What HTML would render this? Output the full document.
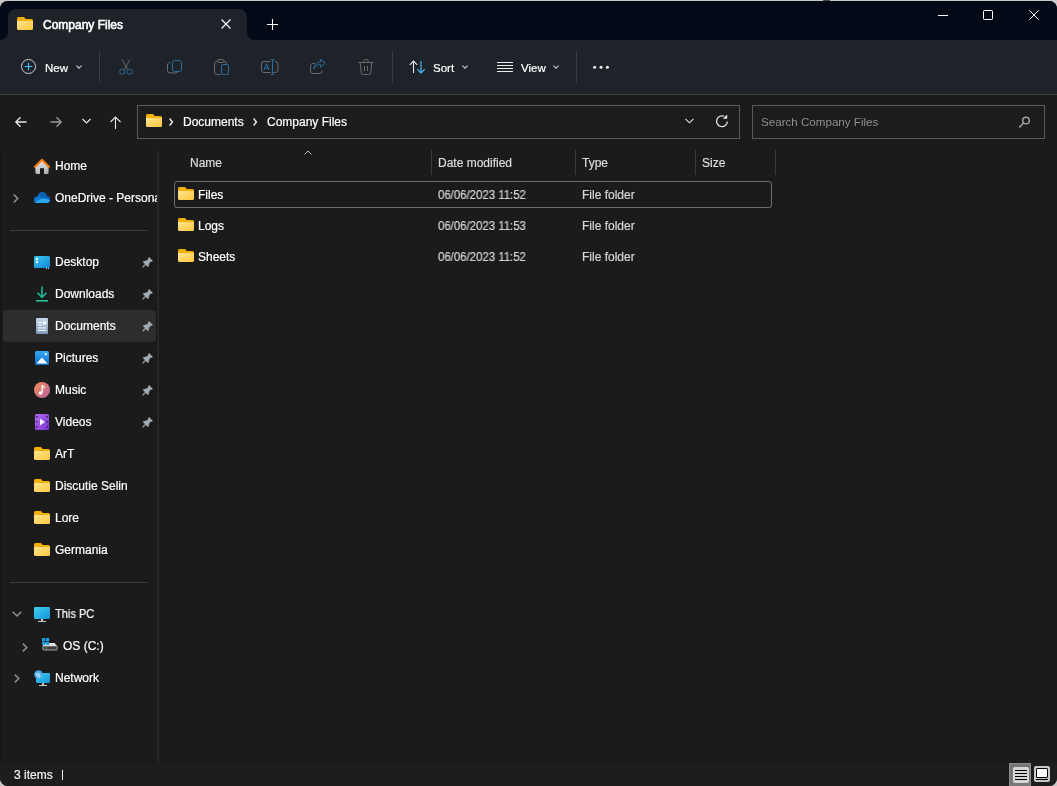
<!DOCTYPE html>
<html><head><meta charset="utf-8"><style>
*{margin:0;padding:0;box-sizing:border-box}
html,body{width:1057px;height:786px;overflow:hidden;background:#c8c8c8;font-family:"Liberation Sans",sans-serif;font-size:12px;color:#fff}
#win{position:absolute;left:0;top:1px;width:1057px;height:785px;background:#1b1b1b;border-radius:8px;overflow:hidden}
#in{position:absolute;left:0;top:-1px;width:1057px;height:786px}
.a{position:absolute}
.t{position:absolute;white-space:nowrap;font-size:12px;line-height:14px;will-change:transform;-webkit-text-stroke:0.2px currentColor}
.sep{position:absolute;width:1px;background:#3a3d44}
.box{position:absolute;border:1px solid #5a5a5a;background:#1c1c1c}
.hsep{position:absolute;width:1px;height:25px;top:150px;background:#3a3a3a}
.dim{color:#d6d6d6}
svg{position:absolute;overflow:visible}
</style></head><body>
<div class="a" style="left:823px;top:0;width:7px;height:1px;background:#454545"></div>
<div id="win"><div id="in">
<svg style="left:0;top:0" width="0" height="0"><defs><linearGradient id="fg" x1="0" y1="0" x2="1" y2="1"><stop offset="0" stop-color="#ffe590"/><stop offset="1" stop-color="#fdc73b"/></linearGradient></defs></svg>
<div class="a" style="left:0;top:0;width:1057px;height:40px;background:#020a17"></div>
<div class="a" style="left:8px;top:9px;width:239px;height:31px;background:#1e2229;border-radius:8px 8px 0 0"></div>
<div class="a" style="left:0;top:32px;width:8px;height:8px;background:#1e2229"></div>
<div class="a" style="left:0;top:32px;width:8px;height:8px;background:#020a17;border-radius:0 0 8px 0"></div>
<div class="a" style="left:247px;top:32px;width:8px;height:8px;background:#1e2229"></div>
<div class="a" style="left:247px;top:32px;width:8px;height:8px;background:#020a17;border-radius:0 0 0 8px"></div>
<svg style="left:17px;top:17px" width="16" height="13" viewBox="0 0 16 13"><path d="M1.5 0H7L8.8 2H14.5A1.5 1.5 0 0 1 16 3.5V8H0V1.5A1.5 1.5 0 0 1 1.5 0Z" fill="#f0b00a"/><path d="M0 4H16V11.5A1.5 1.5 0 0 1 14.5 13H1.5A1.5 1.5 0 0 1 0 11.5Z" fill="url(#fg)"/></svg>
<div class="t" style="left:43px;top:18px;font-size:12px;-webkit-text-stroke:0.55px #fff">Company Files</div>
<svg style="left:221px;top:19px" width="10" height="10" viewBox="0 0 10 10"><path d="M0.5 0.5L9.5 9.5M9.5 0.5L0.5 9.5" stroke="#fff" stroke-width="1.1"/></svg>
<svg style="left:267px;top:19px" width="11" height="11" viewBox="0 0 11 11"><path d="M5.5 0V11M0 5.5H11" stroke="#fff" stroke-width="1.1"/></svg>
<div class="a" style="left:938px;top:15px;width:10px;height:1px;background:#fff"></div>
<div class="a" style="left:983px;top:10px;width:10px;height:10px;border:1px solid #fff;border-radius:1.5px"></div>
<svg style="left:1029px;top:10px" width="10" height="10" viewBox="0 0 10 10"><path d="M0.3 0.3L9.7 9.7M9.7 0.3L0.3 9.7" stroke="#fff" stroke-width="1"/></svg>
<div class="a" style="left:0;top:40px;width:1057px;height:54px;background:#1e2229"></div>
<div class="a" style="left:0;top:94px;width:1057px;height:1px;background:#3e3e3e"></div>
<svg style="left:21px;top:59px" width="15" height="15" viewBox="0 0 15 15"><circle cx="7.5" cy="7.5" r="7" fill="none" stroke="#cfcfcf" stroke-width="1"/><path d="M7.5 3.8V11.2M3.8 7.5H11.2" stroke="#4cc2ff" stroke-width="1.1"/></svg>
<div class="t" style="left:45px;top:61px;font-size:11.5px">New</div>
<svg style="left:76px;top:65px" width="6" height="4" viewBox="0 0 6 4"><path d="M0.4 0.6L3 3.2L5.6 0.6" fill="none" stroke="#c4c4c4" stroke-width="1.1"/></svg>
<div class="sep" style="left:99px;top:51px;height:32px"></div>
<svg style="left:119px;top:59px" width="14" height="16" viewBox="0 0 14 16"><path d="M3 0.5L8.6 10.3M11 0.5L5.4 10.3" stroke="#6a6a6a" stroke-width="1" fill="none"/><circle cx="3.3" cy="12.7" r="2.6" fill="none" stroke="#2b6e9c" stroke-width="1"/><circle cx="10.7" cy="12.7" r="2.6" fill="none" stroke="#2b6e9c" stroke-width="1"/></svg>
<svg style="left:167px;top:59px" width="15" height="15" viewBox="0 0 15 15"><path d="M3.5 3.5A2.5 2.5 0 0 0 0.5 6V11.5A2.5 2.5 0 0 0 3 14H8.5A2.5 2.5 0 0 0 11 11.8" fill="none" stroke="#6a6a6a" stroke-width="1"/><rect x="5.5" y="1.5" width="9" height="11" rx="2.2" fill="none" stroke="#2b6e9c" stroke-width="1"/></svg>
<svg style="left:214px;top:58px" width="16" height="18" viewBox="0 0 16 18"><path d="M3.5 3.5H2.8A2.3 2.3 0 0 0 0.5 5.8V14.2A2.3 2.3 0 0 0 2.8 16.5H6.5" fill="none" stroke="#6a6a6a" stroke-width="1"/><path d="M10 3.5H10.2A2.3 2.3 0 0 1 12.5 5.8V6" fill="none" stroke="#6a6a6a" stroke-width="1"/><rect x="3.5" y="1.5" width="6.5" height="3" rx="1.5" fill="none" stroke="#6a6a6a" stroke-width="1"/><rect x="7.5" y="6.5" width="7" height="10" rx="1.6" fill="none" stroke="#2b6e9c" stroke-width="1"/></svg>
<svg style="left:261px;top:59px" width="18" height="16" viewBox="0 0 18 16"><path d="M9.5 2.5H3A2.5 2.5 0 0 0 0.5 5V11A2.5 2.5 0 0 0 3 13.5H9.5M13.5 2.5H14.5A2.5 2.5 0 0 1 17 5V11A2.5 2.5 0 0 1 14.5 13.5H12.5" fill="none" stroke="#6a6a6a" stroke-width="1"/><path d="M9.8 0.5H13.2M11.5 0.5V15.5M9.8 15.5H13.2" fill="none" stroke="#2b6e9c" stroke-width="1.1"/><path d="M3.2 11L5.6 4.5L8 11M4 9H7.2" fill="none" stroke="#2b6e9c" stroke-width="1"/></svg>
<svg style="left:310px;top:59px" width="16" height="15" viewBox="0 0 16 15"><path d="M5 4.5H3A2.5 2.5 0 0 0 0.5 7V12A2.5 2.5 0 0 0 3 14.5H9.5A2.5 2.5 0 0 0 12 12V11.5" fill="none" stroke="#6a6a6a" stroke-width="1"/><path d="M4 10C4.6 6.8 7.2 5.6 10.5 5.6V8.3L15.3 4.2L10.5 0.3V3C6.3 3.2 4.2 6.3 4 10Z" fill="none" stroke="#2b6e9c" stroke-width="1" stroke-linejoin="round"/></svg>
<svg style="left:358px;top:59px" width="16" height="16" viewBox="0 0 16 16"><path d="M0.5 3.5H15.5M5.8 3.5V2.3A1.8 1.8 0 0 1 7.6 0.5H8.4A1.8 1.8 0 0 1 10.2 2.3V3.5M2.2 3.5L3.2 13.7A2 2 0 0 0 5.2 15.5H10.8A2 2 0 0 0 12.8 13.7L13.8 3.5M6.5 7V12M9.5 7V12" fill="none" stroke="#6a6a6a" stroke-width="1"/></svg>
<div class="sep" style="left:392px;top:51px;height:32px"></div>
<svg style="left:409px;top:60px" width="17" height="14" viewBox="0 0 17 14"><path d="M4.5 13V1M0.8 4.8L4.5 1L8.2 4.8" fill="none" stroke="#e6e6e6" stroke-width="1.1"/><path d="M12 1V13M8.3 9.2L12 13L15.7 9.2" fill="none" stroke="#4cc2ff" stroke-width="1.1"/></svg>
<div class="t" style="left:433px;top:61px;font-size:11.5px">Sort</div>
<svg style="left:462px;top:65px" width="6" height="4" viewBox="0 0 6 4"><path d="M0.4 0.6L3 3.2L5.6 0.6" fill="none" stroke="#c4c4c4" stroke-width="1.1"/></svg>
<div class="a" style="left:497px;top:62px;width:16px;height:1px;background:#eee"></div>
<div class="a" style="left:497px;top:65px;width:16px;height:1px;background:#eee"></div>
<div class="a" style="left:497px;top:68px;width:16px;height:1px;background:#eee"></div>
<div class="a" style="left:497px;top:71px;width:16px;height:1px;background:#eee"></div>
<div class="t" style="left:521px;top:61px;font-size:11.5px">View</div>
<svg style="left:553px;top:65px" width="6" height="4" viewBox="0 0 6 4"><path d="M0.4 0.6L3 3.2L5.6 0.6" fill="none" stroke="#c4c4c4" stroke-width="1.1"/></svg>
<div class="sep" style="left:576px;top:51px;height:32px"></div>
<svg style="left:593px;top:65px" width="16" height="4" viewBox="0 0 16 4"><circle cx="1.6" cy="2.2" r="1.5" fill="#eee"/><circle cx="8" cy="2.2" r="1.5" fill="#eee"/><circle cx="14.4" cy="2.2" r="1.5" fill="#eee"/></svg>
<svg style="left:15px;top:116px" width="12" height="12" viewBox="0 0 12 12"><path d="M11.5 6H1M5.5 1.2L0.8 6L5.5 10.8" fill="none" stroke="#e8e8e8" stroke-width="1.3"/></svg>
<svg style="left:50px;top:116px" width="12" height="12" viewBox="0 0 12 12"><path d="M0.5 6H11M6.5 1.2L11.2 6L6.5 10.8" fill="none" stroke="#9a9a9a" stroke-width="1.3"/></svg>
<svg style="left:82px;top:118px" width="9" height="6" viewBox="0 0 9 6"><path d="M0.5 1L4.5 5L8.5 1" fill="none" stroke="#e8e8e8" stroke-width="1.2"/></svg>
<svg style="left:110px;top:116px" width="11" height="13" viewBox="0 0 11 13"><path d="M5.5 13V1M0.5 6L5.5 1L10.5 6" fill="none" stroke="#e8e8e8" stroke-width="1.1"/></svg>
<div class="box" style="left:137px;top:105px;width:603px;height:34px"></div>
<svg style="left:146px;top:114px" width="16" height="13" viewBox="0 0 16 13"><path d="M1.5 0H7L8.8 2H14.5A1.5 1.5 0 0 1 16 3.5V8H0V1.5A1.5 1.5 0 0 1 1.5 0Z" fill="#f0b00a"/><path d="M0 4H16V11.5A1.5 1.5 0 0 1 14.5 13H1.5A1.5 1.5 0 0 1 0 11.5Z" fill="url(#fg)"/></svg>
<svg style="left:169px;top:118px" width="4" height="8" viewBox="0 0 4 8"><path d="M0.6 0.6L3.4 4L0.6 7.4" fill="none" stroke="#e8e8e8" stroke-width="1.5"/></svg>
<div class="t" style="left:183px;top:115px;">Documents</div>
<svg style="left:253px;top:118px" width="4" height="8" viewBox="0 0 4 8"><path d="M0.6 0.6L3.4 4L0.6 7.4" fill="none" stroke="#e8e8e8" stroke-width="1.5"/></svg>
<div class="t" style="left:267px;top:115px;">Company Files</div>
<svg style="left:685px;top:118px" width="9" height="6" viewBox="0 0 9 6"><path d="M0.5 0.8L4.5 4.8L8.5 0.8" fill="none" stroke="#e0e0e0" stroke-width="1.1"/></svg>
<svg style="left:716px;top:115px" width="13" height="13" viewBox="0 0 13 13"><path d="M11.4 6.6A5.4 5.4 0 1 1 8.3 1.3" fill="none" stroke="#e8e8e8" stroke-width="1.25"/><path d="M6.8 3.8H11.2V-0.4Z" fill="#e8e8e8"/></svg>
<div class="box" style="left:752px;top:105px;width:293px;height:34px"></div>
<div class="t" style="left:761px;top:115px;color:#8f8f8f;font-size:11.6px;-webkit-text-stroke:0">Search Company Files</div>
<svg style="left:1018px;top:116px" width="12" height="13" viewBox="0 0 12 13"><circle cx="8" cy="4.5" r="3.3" fill="none" stroke="#a0a0a0" stroke-width="1.5"/><path d="M5.8 6.8L1.2 11.5" stroke="#a0a0a0" stroke-width="1.6"/></svg>
<div class="a" style="left:0;top:150px;width:2px;height:613px;background:#171717"></div>
<div class="a" style="left:156px;top:150px;width:1px;height:613px;background:#171717"></div>
<div class="a" style="left:157px;top:150px;width:2px;height:613px;background:#262626;border-radius:1px"></div>
<div class="a" style="left:3px;top:310px;width:153px;height:32px;background:#2d2d2d;border-radius:4px"></div>
<div class="a" style="left:10px;top:230px;width:138px;height:1px;background:#3a3a3a"></div>
<div class="a" style="left:10px;top:582px;width:138px;height:1px;background:#3a3a3a"></div>
<svg style="left:34px;top:158px" width="16" height="16" viewBox="0 0 16 16"><defs><linearGradient id="hg" x1="0" y1="0" x2="0.3" y2="1"><stop offset="0" stop-color="#ececec"/><stop offset="1" stop-color="#b4b4b4"/></linearGradient></defs><path d="M8 2.2L14.6 8.4V14.6A1.4 1.4 0 0 1 13.2 16H10V10.2H6V16H2.8A1.4 1.4 0 0 1 1.4 14.6V8.4Z" fill="url(#hg)"/><path d="M1 8.8L8 1.8L15 8.8" fill="none" stroke="#f27a0c" stroke-width="2.2" stroke-linecap="round" stroke-linejoin="round"/></svg>
<div class="t" style="left:55px;top:159px;">Home</div>
<svg style="left:13px;top:194px" width="6" height="9" viewBox="0 0 6 9"><path d="M0.8 0.6L4.8 4.5L0.8 8.4" fill="none" stroke="#8f8f8f" stroke-width="1.5"/></svg>
<svg style="left:34px;top:192px" width="16" height="11" viewBox="0 0 16 11"><defs><clipPath id="cc"><circle cx="3.3" cy="7.7" r="3.3"/><circle cx="8.3" cy="4.7" r="4.5"/><circle cx="12.7" cy="7.6" r="3.3"/><rect x="3.3" y="7" width="9.4" height="4"/></clipPath></defs><g clip-path="url(#cc)"><rect x="0" y="0" width="16" height="11" fill="#0f78d4"/><path d="M5 0H16V8.2C13.5 5.8 10 5.6 7.5 6.6L4.5 3.5Z" fill="#0862b6"/><path d="M0 10.6C3 9.6 6 6.6 9.5 6.6C12.5 6.6 14.5 7.6 16 8.6V11H0Z" fill="#29a9ec"/></g></svg>
<div class="t" style="left:55px;top:191px;width:102px;overflow:hidden">OneDrive - Personal</div>
<svg style="left:34px;top:256px" width="16" height="13" viewBox="0 0 16 13"><defs><linearGradient id="dg" x1="0" y1="0" x2="1" y2="1"><stop offset="0" stop-color="#3ccbf4"/><stop offset="1" stop-color="#1383d4"/></linearGradient></defs><rect x="0" y="0" width="16" height="12" rx="1.5" fill="url(#dg)"/><rect x="2" y="2" width="2" height="2" fill="#fff"/><rect x="2" y="5" width="2" height="2" fill="#fff"/><rect x="12" y="12" width="1" height="1" fill="#ddd"/><rect x="14" y="12" width="1" height="1" fill="#ddd"/></svg>
<div class="t" style="left:55px;top:255px;">Desktop</div>
<svg style="left:136px;top:249px" width="24" height="24" viewBox="0 0 24 24"><g transform="translate(9.85,15.05) rotate(45)"><path d="M-2.6 -7H2.6L1.4 -3.8L3.7 0.5H-3.7L-1.4 -3.8Z" fill="#a2aab2" stroke="#a2aab2" stroke-width="0.4" stroke-linejoin="round"/><path d="M0 0.5V3.8" stroke="#a2aab2" stroke-width="1.3" stroke-linecap="round"/></g></svg>
<svg style="left:36px;top:286px" width="12" height="16" viewBox="0 0 12 16"><path d="M6 0.5V11M1.5 6.8L6 11.3L10.5 6.8" fill="none" stroke="#1fb89a" stroke-width="1.6"/><rect x="0" y="14" width="12" height="1.6" fill="#22c3a0"/></svg>
<div class="t" style="left:55px;top:287px;">Downloads</div>
<svg style="left:136px;top:281px" width="24" height="24" viewBox="0 0 24 24"><g transform="translate(9.85,15.05) rotate(45)"><path d="M-2.6 -7H2.6L1.4 -3.8L3.7 0.5H-3.7L-1.4 -3.8Z" fill="#a2aab2" stroke="#a2aab2" stroke-width="0.4" stroke-linejoin="round"/><path d="M0 0.5V3.8" stroke="#a2aab2" stroke-width="1.3" stroke-linecap="round"/></g></svg>
<svg style="left:36px;top:318px" width="12" height="16" viewBox="0 0 12 16"><defs><linearGradient id="docg" x1="0" y1="0" x2="0" y2="1"><stop offset="0" stop-color="#c8d8ea"/><stop offset="1" stop-color="#7f9ab8"/></linearGradient></defs><rect x="0" y="0" width="12" height="16" rx="1.2" fill="url(#docg)"/><rect x="2" y="4" width="4" height="1" fill="#fff"/><rect x="2" y="6.5" width="4" height="1" fill="#fff"/><rect x="7" y="3.5" width="3" height="3" fill="#fff"/><rect x="2" y="9.5" width="8" height="1" fill="#fff"/><rect x="2" y="12" width="8" height="1" fill="#fff"/></svg>
<div class="t" style="left:55px;top:319px;">Documents</div>
<svg style="left:136px;top:313px" width="24" height="24" viewBox="0 0 24 24"><g transform="translate(9.85,15.05) rotate(45)"><path d="M-2.6 -7H2.6L1.4 -3.8L3.7 0.5H-3.7L-1.4 -3.8Z" fill="#a2aab2" stroke="#a2aab2" stroke-width="0.4" stroke-linejoin="round"/><path d="M0 0.5V3.8" stroke="#a2aab2" stroke-width="1.3" stroke-linecap="round"/></g></svg>
<svg style="left:35px;top:351px" width="14" height="14" viewBox="0 0 14 14"><defs><linearGradient id="pg" x1="0" y1="0" x2="0" y2="1"><stop offset="0" stop-color="#36a8f4"/><stop offset="1" stop-color="#0b6fcc"/></linearGradient></defs><rect x="0" y="0" width="14" height="14" rx="1.5" fill="url(#pg)"/><path d="M1.5 12.5L7 6.5L12.5 12.5Z" fill="#fff"/><circle cx="10.8" cy="3.2" r="1.1" fill="#fff"/></svg>
<div class="t" style="left:55px;top:351px;">Pictures</div>
<svg style="left:136px;top:345px" width="24" height="24" viewBox="0 0 24 24"><g transform="translate(9.85,15.05) rotate(45)"><path d="M-2.6 -7H2.6L1.4 -3.8L3.7 0.5H-3.7L-1.4 -3.8Z" fill="#a2aab2" stroke="#a2aab2" stroke-width="0.4" stroke-linejoin="round"/><path d="M0 0.5V3.8" stroke="#a2aab2" stroke-width="1.3" stroke-linecap="round"/></g></svg>
<svg style="left:34px;top:382px" width="16" height="16" viewBox="0 0 16 16"><defs><linearGradient id="mg" x1="0" y1="0" x2="1" y2="1"><stop offset="0" stop-color="#f29055"/><stop offset="1" stop-color="#b9609e"/></linearGradient></defs><circle cx="8" cy="8" r="8" fill="url(#mg)"/><path d="M8.2 3.2V10.5" stroke="#fff" stroke-width="1.4"/><circle cx="6.6" cy="11" r="1.8" fill="#fff"/><path d="M8.2 3.5C9.5 4 10.5 4.5 10.2 6.2" fill="none" stroke="#fff" stroke-width="1.2"/></svg>
<div class="t" style="left:55px;top:383px;">Music</div>
<svg style="left:136px;top:377px" width="24" height="24" viewBox="0 0 24 24"><g transform="translate(9.85,15.05) rotate(45)"><path d="M-2.6 -7H2.6L1.4 -3.8L3.7 0.5H-3.7L-1.4 -3.8Z" fill="#a2aab2" stroke="#a2aab2" stroke-width="0.4" stroke-linejoin="round"/><path d="M0 0.5V3.8" stroke="#a2aab2" stroke-width="1.3" stroke-linecap="round"/></g></svg>
<svg style="left:35px;top:414px" width="14" height="16" viewBox="0 0 14 16"><defs><linearGradient id="vg" x1="0" y1="0" x2="1" y2="1"><stop offset="0" stop-color="#b06cf0"/><stop offset="1" stop-color="#7a34d0"/></linearGradient></defs><rect x="0" y="0" width="14" height="16" rx="1.5" fill="url(#vg)"/><rect x="1" y="2" width="1.5" height="1.5" fill="#3b1a6a"/><rect x="1" y="7" width="1.5" height="1.5" fill="#3b1a6a"/><rect x="1" y="12" width="1.5" height="1.5" fill="#3b1a6a"/><rect x="11.5" y="2" width="1.5" height="1.5" fill="#3b1a6a"/><rect x="11.5" y="7" width="1.5" height="1.5" fill="#3b1a6a"/><rect x="11.5" y="12" width="1.5" height="1.5" fill="#3b1a6a"/><path d="M5 4.5L10 8L5 11.5Z" fill="#f4f0fa"/></svg>
<div class="t" style="left:55px;top:415px;">Videos</div>
<svg style="left:136px;top:409px" width="24" height="24" viewBox="0 0 24 24"><g transform="translate(9.85,15.05) rotate(45)"><path d="M-2.6 -7H2.6L1.4 -3.8L3.7 0.5H-3.7L-1.4 -3.8Z" fill="#a2aab2" stroke="#a2aab2" stroke-width="0.4" stroke-linejoin="round"/><path d="M0 0.5V3.8" stroke="#a2aab2" stroke-width="1.3" stroke-linecap="round"/></g></svg>
<svg style="left:34px;top:447px" width="16" height="13" viewBox="0 0 16 13"><path d="M1.5 0H7L8.8 2H14.5A1.5 1.5 0 0 1 16 3.5V8H0V1.5A1.5 1.5 0 0 1 1.5 0Z" fill="#f0b00a"/><path d="M0 4H16V11.5A1.5 1.5 0 0 1 14.5 13H1.5A1.5 1.5 0 0 1 0 11.5Z" fill="url(#fg)"/></svg>
<div class="t" style="left:55px;top:447px;">ArT</div>
<svg style="left:34px;top:479px" width="16" height="13" viewBox="0 0 16 13"><path d="M1.5 0H7L8.8 2H14.5A1.5 1.5 0 0 1 16 3.5V8H0V1.5A1.5 1.5 0 0 1 1.5 0Z" fill="#f0b00a"/><path d="M0 4H16V11.5A1.5 1.5 0 0 1 14.5 13H1.5A1.5 1.5 0 0 1 0 11.5Z" fill="url(#fg)"/></svg>
<div class="t" style="left:55px;top:479px;">Discutie Selin</div>
<svg style="left:34px;top:511px" width="16" height="13" viewBox="0 0 16 13"><path d="M1.5 0H7L8.8 2H14.5A1.5 1.5 0 0 1 16 3.5V8H0V1.5A1.5 1.5 0 0 1 1.5 0Z" fill="#f0b00a"/><path d="M0 4H16V11.5A1.5 1.5 0 0 1 14.5 13H1.5A1.5 1.5 0 0 1 0 11.5Z" fill="url(#fg)"/></svg>
<div class="t" style="left:55px;top:511px;">Lore</div>
<svg style="left:34px;top:543px" width="16" height="13" viewBox="0 0 16 13"><path d="M1.5 0H7L8.8 2H14.5A1.5 1.5 0 0 1 16 3.5V8H0V1.5A1.5 1.5 0 0 1 1.5 0Z" fill="#f0b00a"/><path d="M0 4H16V11.5A1.5 1.5 0 0 1 14.5 13H1.5A1.5 1.5 0 0 1 0 11.5Z" fill="url(#fg)"/></svg>
<div class="t" style="left:55px;top:543px;">Germania</div>
<svg style="left:12px;top:611px" width="10" height="6" viewBox="0 0 10 6"><path d="M0.7 0.7L5 5L9.3 0.7" fill="none" stroke="#8f8f8f" stroke-width="1.5"/></svg>
<svg style="left:34px;top:607px" width="16" height="15" viewBox="0 0 16 15"><defs><linearGradient id="pcg" x1="0" y1="0" x2="1" y2="1"><stop offset="0" stop-color="#3fd0f0"/><stop offset="1" stop-color="#1590d8"/></linearGradient></defs><rect x="0" y="0" width="16" height="12" rx="1" fill="url(#pcg)"/><rect x="7" y="12" width="2" height="2" fill="#c8c8c8"/><rect x="4" y="14" width="8" height="1" fill="#c8c8c8"/></svg>
<div class="t" style="left:55px;top:607px;transform:scaleX(0.92);transform-origin:0 0">This PC</div>
<svg style="left:22px;top:643px" width="6" height="9" viewBox="0 0 6 9"><path d="M0.8 0.6L4.8 4.5L0.8 8.4" fill="none" stroke="#8f8f8f" stroke-width="1.5"/></svg>
<svg style="left:42px;top:638px" width="16" height="13" viewBox="0 0 16 13"><path d="M2.2 5H12.6L15.2 8.2H0.6Z" fill="#e4e4e4"/><rect x="0.9" y="8" width="14.2" height="4" rx="0.6" fill="#3c3c3c" stroke="#bdbdbd" stroke-width="0.8"/><rect x="3.6" y="9.3" width="1.3" height="1.3" fill="#3fd13f"/><rect x="0" y="0" width="3.3" height="3.2" fill="#1b9de2"/><rect x="3.8" y="0" width="3.3" height="3.2" fill="#1b9de2"/><rect x="0" y="3.7" width="3.3" height="3.2" fill="#1b9de2"/><rect x="3.8" y="3.7" width="3.3" height="3.2" fill="#1b9de2"/></svg>
<div class="t" style="left:63px;top:639px;">OS (C:)</div>
<svg style="left:14px;top:674px" width="6" height="9" viewBox="0 0 6 9"><path d="M0.8 0.6L4.8 4.5L0.8 8.4" fill="none" stroke="#8f8f8f" stroke-width="1.5"/></svg>
<svg style="left:34px;top:670px" width="16" height="16" viewBox="0 0 16 16"><rect x="2" y="3" width="14" height="10" rx="1" fill="url(#pcg)"/><rect x="8" y="13" width="2" height="2" fill="#c8c8c8"/><rect x="5" y="15" width="8" height="1" fill="#c8c8c8"/><circle cx="4.5" cy="4.5" r="4.3" fill="#4aa6e6"/><path d="M1.2 3.6C2.6 2.2 5 2.4 6.2 4C7.2 5.4 6.8 7.4 5.6 8.4C4 7.5 2 6 1.2 3.6Z" fill="#9ad6f6"/></svg>
<div class="t" style="left:55px;top:671px;">Network</div>
<div class="t" style="left:190px;top:156px;color:#dcdcdc">Name</div>
<svg style="left:304px;top:150px" width="8" height="5" viewBox="0 0 8 5"><path d="M0.5 4.5L4 1L7.5 4.5" fill="none" stroke="#bdbdbd" stroke-width="1"/></svg>
<div class="hsep" style="left:431px"></div>
<div class="hsep" style="left:575px"></div>
<div class="hsep" style="left:695px"></div>
<div class="hsep" style="left:775px"></div>
<div class="t" style="left:438px;top:156px;color:#dcdcdc">Date modified</div>
<div class="t" style="left:582px;top:156px;color:#dcdcdc">Type</div>
<div class="t" style="left:702px;top:156px;color:#dcdcdc">Size</div>
<div class="a" style="left:174px;top:181px;width:598px;height:27px;border:1px solid #6e6e6e;border-radius:3px"></div>
<svg style="left:178px;top:187px" width="16" height="13" viewBox="0 0 16 13"><path d="M1.5 0H7L8.8 2H14.5A1.5 1.5 0 0 1 16 3.5V8H0V1.5A1.5 1.5 0 0 1 1.5 0Z" fill="#f0b00a"/><path d="M0 4H16V11.5A1.5 1.5 0 0 1 14.5 13H1.5A1.5 1.5 0 0 1 0 11.5Z" fill="url(#fg)"/></svg>
<div class="t" style="left:198px;top:188px;">Files</div>
<div class="t" style="left:438px;top:188px;color:#d6d6d6;transform:scaleX(0.95);transform-origin:0 0">06/06/2023 11:52</div>
<div class="t" style="left:582px;top:188px;color:#d6d6d6">File folder</div>
<svg style="left:178px;top:218px" width="16" height="13" viewBox="0 0 16 13"><path d="M1.5 0H7L8.8 2H14.5A1.5 1.5 0 0 1 16 3.5V8H0V1.5A1.5 1.5 0 0 1 1.5 0Z" fill="#f0b00a"/><path d="M0 4H16V11.5A1.5 1.5 0 0 1 14.5 13H1.5A1.5 1.5 0 0 1 0 11.5Z" fill="url(#fg)"/></svg>
<div class="t" style="left:198px;top:219px;">Logs</div>
<div class="t" style="left:438px;top:219px;color:#d6d6d6;transform:scaleX(0.95);transform-origin:0 0">06/06/2023 11:53</div>
<div class="t" style="left:582px;top:219px;color:#d6d6d6">File folder</div>
<svg style="left:178px;top:249px" width="16" height="13" viewBox="0 0 16 13"><path d="M1.5 0H7L8.8 2H14.5A1.5 1.5 0 0 1 16 3.5V8H0V1.5A1.5 1.5 0 0 1 1.5 0Z" fill="#f0b00a"/><path d="M0 4H16V11.5A1.5 1.5 0 0 1 14.5 13H1.5A1.5 1.5 0 0 1 0 11.5Z" fill="url(#fg)"/></svg>
<div class="t" style="left:198px;top:250px;">Sheets</div>
<div class="t" style="left:438px;top:250px;color:#d6d6d6;transform:scaleX(0.95);transform-origin:0 0">06/06/2023 11:52</div>
<div class="t" style="left:582px;top:250px;color:#d6d6d6">File folder</div>
<div class="a" style="left:0;top:763px;width:1057px;height:23px;background:#1d1d1d"></div>
<div class="t" style="left:14px;top:768px;color:#f2f2f2">3 items</div>
<div class="a" style="left:62px;top:770px;width:1px;height:10px;background:#f2f2f2"></div>
<div class="a" style="left:1009px;top:763px;width:22px;height:24px;background:#777;border:1px solid #8a8a8a"></div>
<div class="a" style="left:1013px;top:767px;width:16px;height:16px;background:#d6d6d6;border-radius:2px"></div>
<div class="a" style="left:1015px;top:770px;width:12px;height:1px;background:#000"></div>
<div class="a" style="left:1015px;top:773px;width:12px;height:1px;background:#000"></div>
<div class="a" style="left:1015px;top:776px;width:12px;height:1px;background:#000"></div>
<div class="a" style="left:1015px;top:779px;width:12px;height:1px;background:#000"></div>
<div class="a" style="left:1034px;top:766px;width:16px;height:16px;background:#c8c8c8;border-radius:2px"></div>
<div class="a" style="left:1036px;top:768px;width:12px;height:10px;background:#fff;border:1px solid #000;border-radius:1px"></div>
<div class="a" style="left:1036px;top:779px;width:12px;height:1px;background:#000"></div>
</div></div>
</body></html>
